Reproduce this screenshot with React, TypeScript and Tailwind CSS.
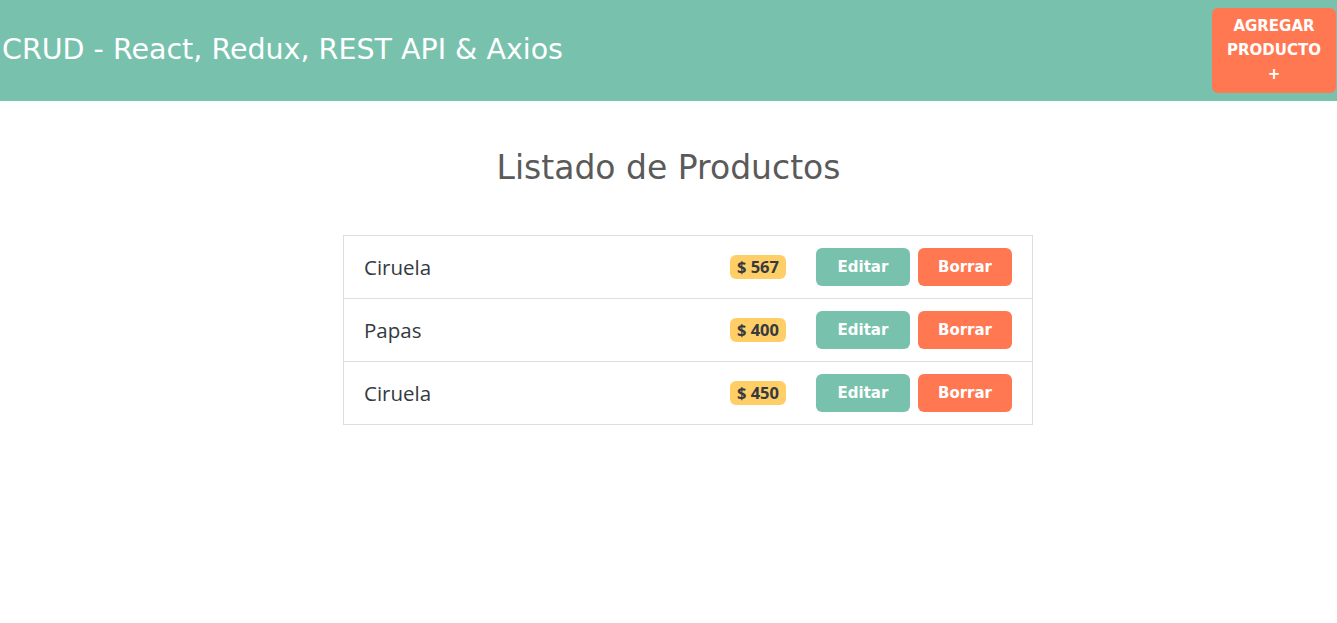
import React from "react";

const products = [
  { name: "Ciruela", price: 567 },
  { name: "Papas", price: 400 },
  { name: "Ciruela", price: 450 },
];

const heading = { fontFamily: '"DejaVu Sans", "Noto Sans", sans-serif' };
const body = { fontFamily: '"Open Sans", "Noto Sans", sans-serif' };

export default function App() {
  return (
    <div className="min-h-[623px] bg-white" style={body}>
      <header className="flex h-[101px] items-center justify-between bg-[#78c2ad] pl-[2px] pr-px">
        <h1 className="text-[28.5px] font-normal text-white" style={heading}>
          CRUD - React, Redux, REST API &amp; Axios
        </h1>
        <button
          className="flex h-[85px] w-[124px] flex-col items-center justify-center rounded-md bg-[#ff7851] pb-[2px] text-[15px] font-bold leading-[24px] text-white"
          style={heading}
        >
          <span>AGREGAR</span>
          <span>PRODUCTO</span>
          <span>+</span>
        </button>
      </header>
      <main className="flex flex-col">
        <h2
          className="mt-[47px] text-center text-[33px] font-normal leading-[40px] text-[#5a5a5a]"
          style={heading}
        >
          Listado de Productos
        </h2>
        <div className="mt-[47px] flex justify-center pl-[39px]">
          <ul className="w-[690px] border border-[#dddddd]">
            {products.map((p, i) => (
              <li
                key={i}
                className={`flex items-center justify-between pl-[20px] pr-[20px] ${i > 0 ? "h-[63px] border-t border-[#dddddd]" : "h-[62px]"}`}
              >
                <span className="text-[20.5px] text-[#343a40]">{p.name}</span>
                <div className="flex items-center">
                  <span className="rounded-md bg-[#ffce67] px-[7px] text-[16.5px] font-bold leading-[24px] text-[#343a40]">
                    $ {p.price}
                  </span>
                  <button
                    className="ml-[30px] h-[38px] w-[94px] rounded-md bg-[#78c2ad] text-[15px] font-bold text-white"
                    style={heading}
                  >
                    Editar
                  </button>
                  <button
                    className="ml-[8px] h-[38px] w-[94px] rounded-md bg-[#ff7851] text-[15px] font-bold text-white"
                    style={heading}
                  >
                    Borrar
                  </button>
                </div>
              </li>
            ))}
          </ul>
        </div>
      </main>
    </div>
  );
}
